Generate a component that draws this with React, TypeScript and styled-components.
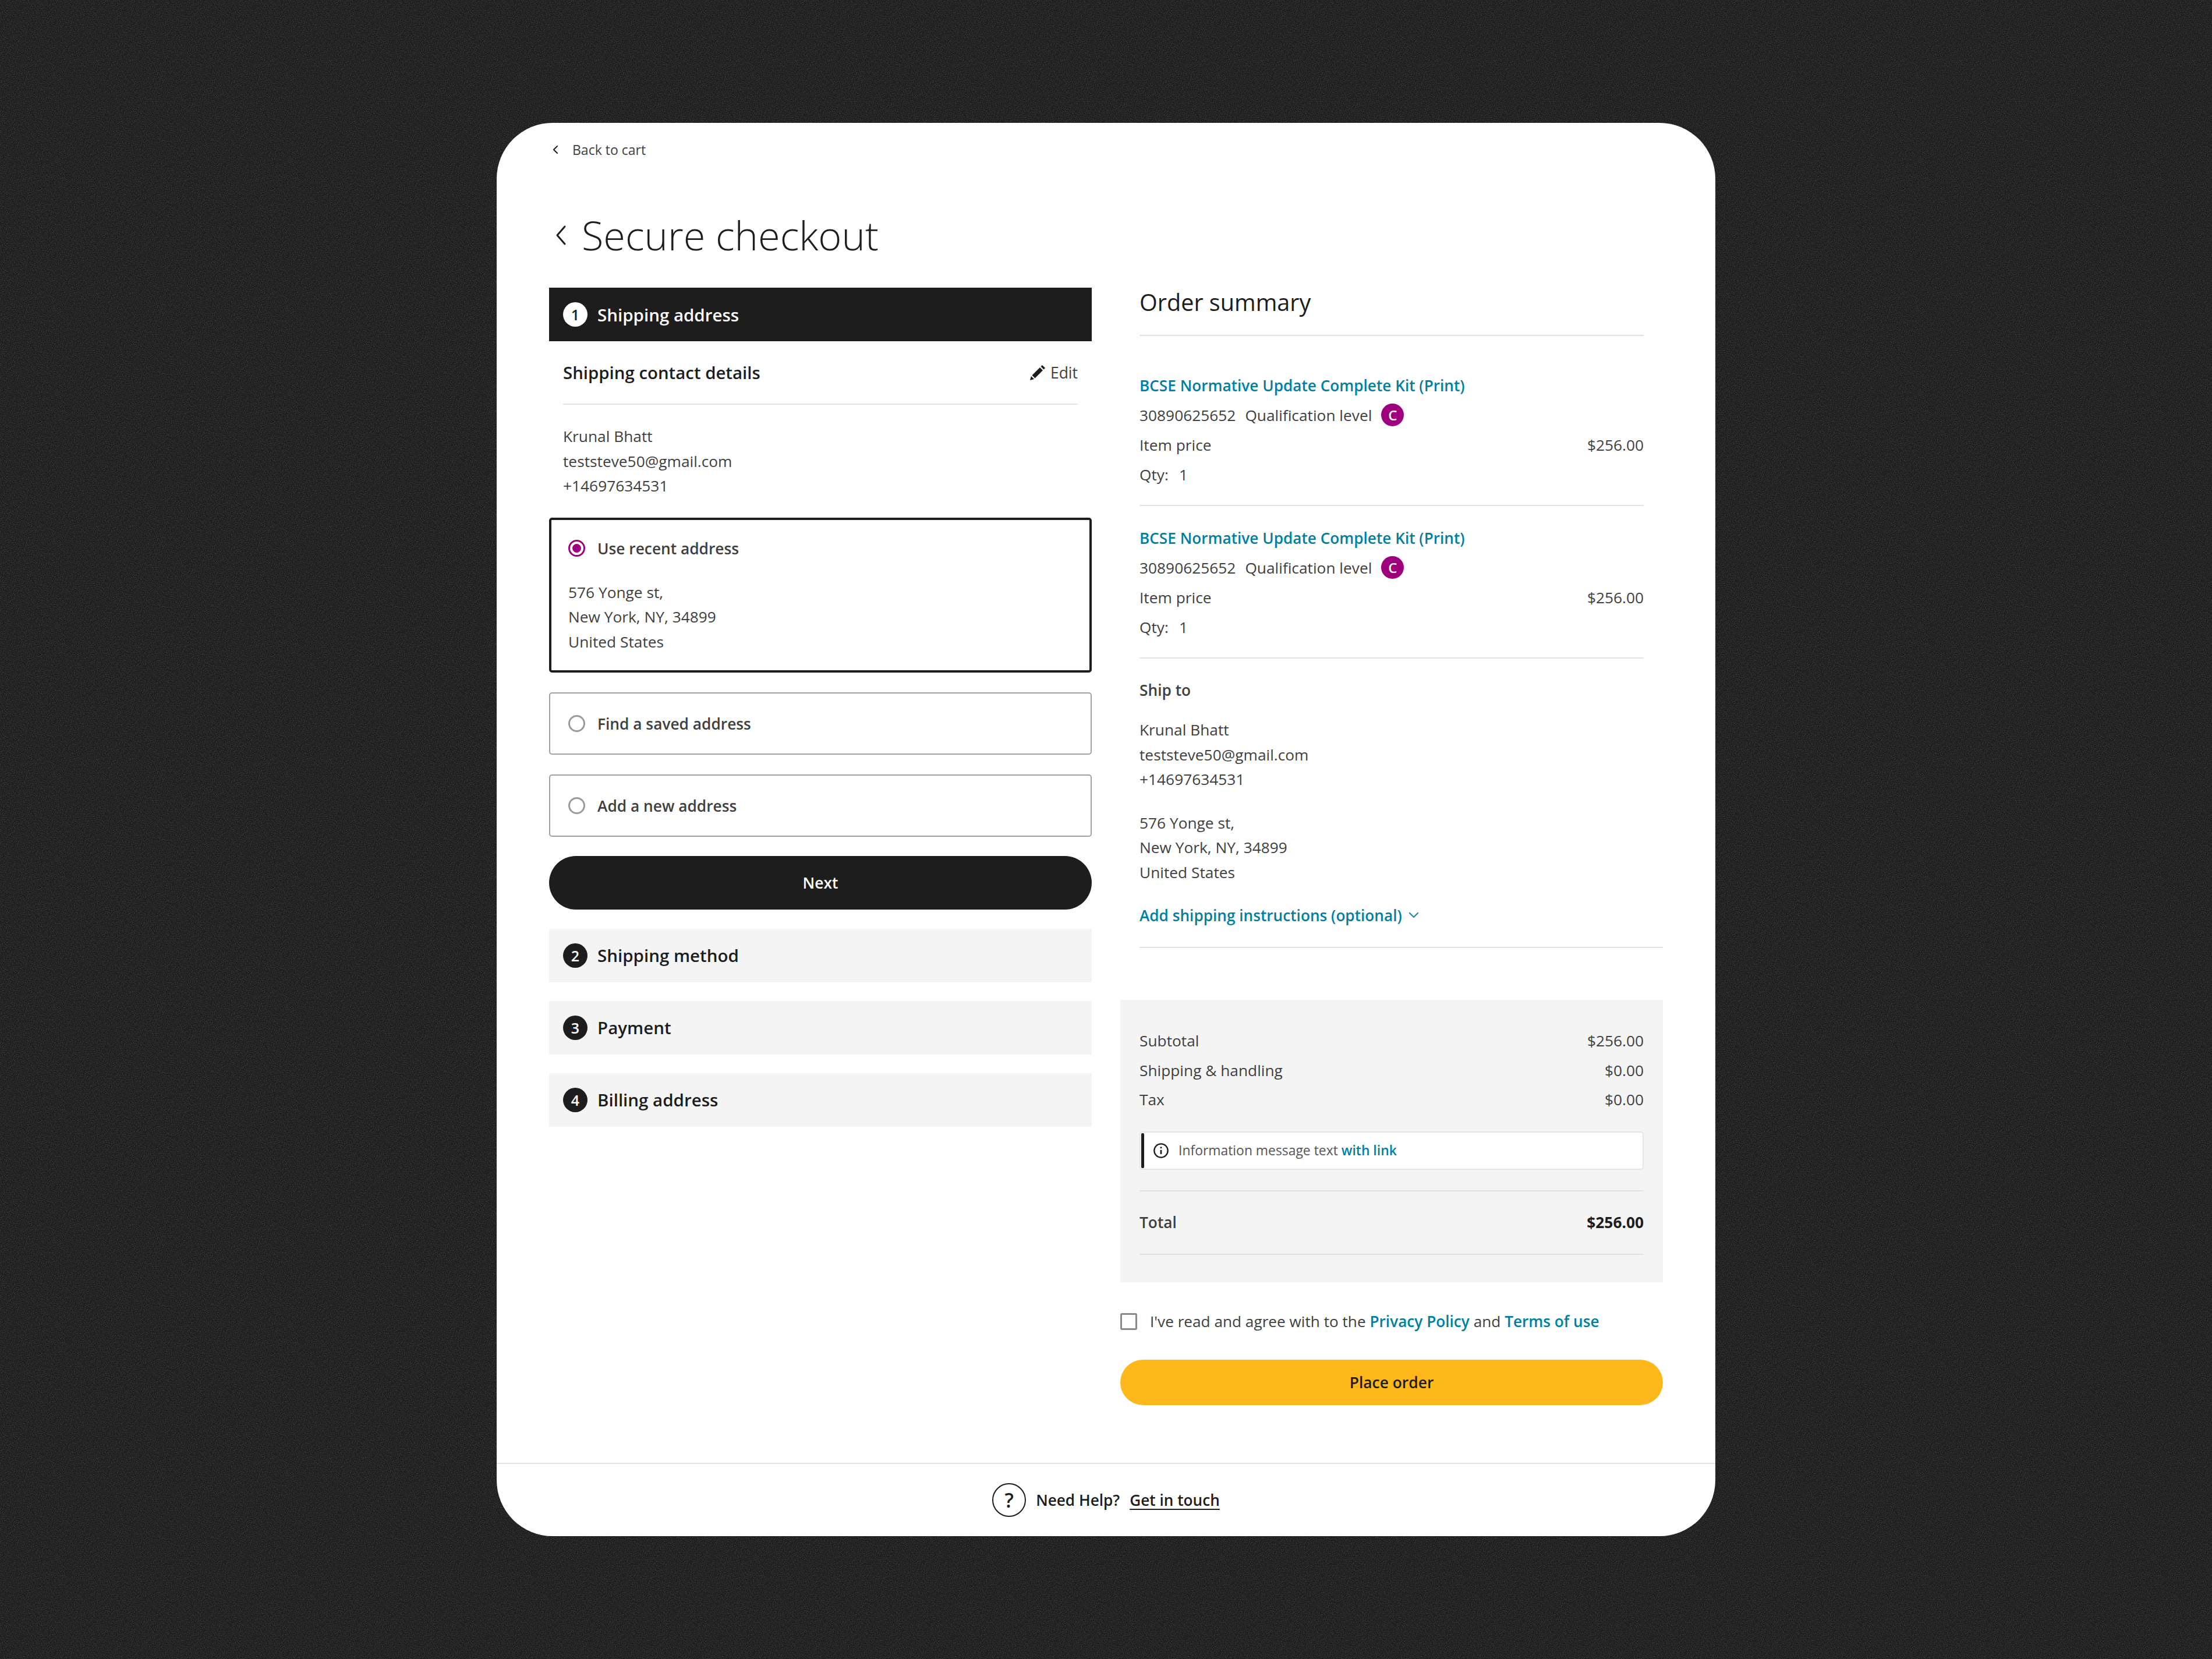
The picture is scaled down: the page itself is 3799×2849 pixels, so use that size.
import React from 'react';
import styled, { createGlobalStyle } from 'styled-components';

const noise = "data:image/svg+xml," + encodeURIComponent(
  `<svg xmlns='http://www.w3.org/2000/svg' width='400' height='400'><filter id='n'><feTurbulence type='fractalNoise' baseFrequency='0.7' numOctaves='2' stitchTiles='stitch'/><feColorMatrix values='0 0 0 0 1  0 0 0 0 1  0 0 0 0 1  0.4 0 0 0 -0.17'/></filter><rect width='400' height='400' filter='url(#n)'/></svg>`
);

const Global = createGlobalStyle`
  html, body { margin: 0; padding: 0; background: #1c1c1c; }
  * { box-sizing: border-box; }
  body { font-family: "Open Sans", "Noto Sans", sans-serif; color: #404040; }
`;

const Page = styled.div`
  width: 3799px; height: 2849px; display: flex; align-items: center; justify-content: center;
  background-color: #1c1c1c; background-image: url("${noise}");
`;
const Card = styled.main`
  width: 2093px; height: 2427px; background: #fff; border-radius: 96px; display: flex; flex-direction: column; overflow: hidden;
`;
const Body = styled.div`flex: 1; padding: 0 90px;`;
const BackLink = styled.a`
  display: flex; align-items: center; gap: 24px; height: 46px; margin-top: 23px; padding-left: 6px; font-size: 23px; color: #404040;
`;
const Title = styled.h1`
  margin: 76px 0 0; height: 96px; display: flex; align-items: center; gap: 26px; padding-left: 11px; font-size: 68.5px; font-weight: 300; color: #1d1d1d; line-height: 96px;
`;
const Columns = styled.div`display: grid; grid-template-columns: 932px 932px; column-gap: 49px; margin-top: 42px;`;
const LeftCol = styled.section`display: flex; flex-direction: column;`;
const RightCol = styled.section`display: flex; flex-direction: column;`;

const StepBar = styled.div<{ $active?: boolean }>`
  height: 92px; display: flex; align-items: center; gap: 17px; padding: 0 24px;
  background: ${p => p.$active ? '#1d1d1d' : '#f4f4f4'};
  color: ${p => p.$active ? '#fff' : '#1d1d1d'};
  font-size: 29.5px; font-weight: 600; margin-top: ${p => p.$active ? 0 : 32}px;
`;
const StepNum = styled.span<{ $active?: boolean }>`
  width: 42px; height: 42px; border-radius: 50%; display: flex; align-items: center; justify-content: center;
  background: ${p => p.$active ? '#fff' : '#1d1d1d'}; color: ${p => p.$active ? '#1d1d1d' : '#fff'};
  font-size: 25px; font-weight: 600;
`;
const ContactHead = styled.div`
  margin: 0 24px; height: 109px; display: flex; align-items: center; justify-content: space-between; border-bottom: 2px solid #e4e4e4;
  font-size: 29.4px; font-weight: 600; color: #1d1d1d;
`;
const EditLink = styled.a`display: flex; align-items: center; gap: 8px; font-size: 26.5px; font-weight: 400; color: #404040;`;
const Lines = styled.div<{ $mt?: number; $ml?: number }>`
  margin-top: ${p => p.$mt ?? 0}px; margin-left: ${p => p.$ml ?? 0}px; font-size: 26.3px; line-height: 42.5px; color: #404040;
`;
const RadioCard = styled.div<{ $selected?: boolean }>`
  margin-top: ${p => p.$selected ? 33 : 34}px; border-radius: 5px; padding: ${p => p.$selected ? '0 29px' : '0 31px'};
  border: ${p => p.$selected ? '4px solid #1d1d1d' : '2px solid #a0a0a0'};
  height: ${p => p.$selected ? 266 : 107}px;
`;
const RadioRow = styled.div<{ $h: number }>`
  height: ${p => p.$h}px; display: flex; align-items: center; gap: 21px; font-size: 26.3px; font-weight: 600; color: #404040;
`;
const RadioDot = styled.span<{ $on?: boolean }>`
  width: 29px; height: 29px; border-radius: 50%; flex: none;
  border: 3px solid ${p => p.$on ? '#9e007e' : '#9a9a9a'}; padding: 4px;
  &::after { content: ''; display: ${p => p.$on ? 'block' : 'none'}; width: 100%; height: 100%; border-radius: 50%; background: #9e007e; }
`;
const NextButton = styled.button`
  margin: 33px 0 1px; height: 92px; border: 0; border-radius: 46px; background: #1d1d1d; color: #fff; font: 600 26.4px "Open Sans", sans-serif;
`;

const SummaryTitle = styled.h2`
  margin: 0 33px; height: 83px; font-size: 39.6px; line-height: 50px; font-weight: 400; color: #1d1d1d; border-bottom: 2px solid #e0e0e0;
`;
const SummaryInner = styled.div`padding: 0 33px;`;
const Item = styled.div<{ $first?: boolean }>`
  padding-top: ${p => p.$first ? 60 : 30}px; padding-bottom: 27px; border-bottom: 2px solid #e4e4e4;
`;
const Row = styled.div`
  height: 51px; display: flex; align-items: center; justify-content: space-between; font-size: 26.3px; line-height: 46px; color: #404040;
`;
const TopRow = styled(Row)`height: 50px;`;
const Inline = styled.span`display: flex; align-items: center; gap: 16px;`;
const ItemLink = styled.a`font-size: 26.2px; font-weight: 600; color: #007fa3;`;
const LevelBadge = styled.span`
  width: 39px; height: 39px; border-radius: 50%; background: #9e007e; color: #fff; font-size: 24px; font-weight: 600; display: flex; align-items: center; justify-content: center;
`;
const QtyValue = styled.span`margin-left: 18px;`;
const ShipTo = styled.div`font-size: 26.3px; font-weight: 600; color: #404040; line-height: 42px; margin-top: 33px;`;
const AddLink = styled.a`
  display: flex; align-items: center; gap: 11px; height: 42px; margin-top: 32px; font-size: 26.2px; font-weight: 600; color: #007fa3;
`;
const WideRule = styled.div`height: 2px; background: #e4e4e4; margin: 33px 0 0 33px;`;
const Totals = styled.div`margin-top: 89px; height: 485px; background: #f4f4f4; padding: 45px 33px 0;`;
const TotalRow = styled(Row)`height: 50.5px;`;
const InfoBox = styled.div`
  margin-top: 29px; height: 66px; background: #fff; border: 2px solid #e6e6e6; border-radius: 5px; position: relative;
  display: flex; align-items: center; gap: 16px; padding-left: 21px; font-size: 22.9px; color: #555;
  &::before { content: ''; position: absolute; left: 1px; top: 1px; bottom: 1px; width: 5px; background: #1d1d1d; border-radius: 2px; }
`;
const InfoLink = styled.a`color: #007fa3; font-weight: 600;`;
const Rule = styled.div<{ $mt: number }>`height: 2px; background: #e0e0e0; margin-top: ${p => p.$mt}px;`;
const GrandRow = styled(Row)`height: 107px; font-weight: 600;`;
const GrandValue = styled.span`font-weight: 700; color: #1d1d1d;`;
const Agree = styled.label`
  display: flex; align-items: center; gap: 22px; height: 42px; margin-top: 46px; font-size: 26.2px; color: #404040;
`;
const Box = styled.span`width: 29px; height: 29px; border: 3px solid #8a8a8a; border-radius: 3px; flex: none;`;
const AgreeLink = styled.a`font-weight: 600; color: #007fa3;`;
const PlaceButton = styled.button`
  margin-top: 45px; height: 78px; border: 0; border-radius: 39px; background: #ffb81c; color: #1d1d1d; font: 600 26.4px "Open Sans", sans-serif;
`;
const Footer = styled.footer`
  height: 126px; border-top: 2px solid #e4e4e4; display: flex; align-items: center; justify-content: center; gap: 17px; font-size: 26.2px; font-weight: 600; color: #1d1d1d;
`;
const HelpCircle = styled.span`
  width: 58px; height: 58px; border: 2px solid #1d1d1d; border-radius: 50%; display: flex; align-items: center; justify-content: center; font-size: 34px; font-weight: 600;
`;
const GetInTouch = styled.a`text-decoration: underline; text-underline-offset: 5px;`;

const Chevron = ({ w, h, sw }: { w: number; h: number; sw: number }) => (
  <svg width={w} height={h} viewBox={`0 0 ${w} ${h}`} fill="none" stroke="#1d1d1d" strokeWidth={sw} strokeLinecap="round" strokeLinejoin="round">
    <path d={`M${w - sw} ${sw} L${sw} ${h / 2} L${w - sw} ${h - sw}`} />
  </svg>
);
const Pencil = () => (
  <svg width="28" height="28" viewBox="0 0 28 28" fill="#1d1d1d">
    <path d="M1 27l2-7 5 5z" />
    <path d="M4.500 18.500L18 5l5 5L9.500 23.500z" />
    <path d="M19.500 3.500l2.500-2.500 5 5-2.500 2.500z" />
  </svg>
);
const Info = () => (
  <svg width="28" height="28" viewBox="0 0 24 24" fill="none" stroke="#1d1d1d" strokeWidth="2">
    <circle cx="12" cy="12" r="10" />
    <path d="M12 11v6" strokeWidth="2.4" />
    <circle cx="12" cy="7.500" r="1.300" fill="#1d1d1d" stroke="none" />
  </svg>
);
const Down = () => (
  <svg width="18" height="12" viewBox="0 0 18 12" fill="none" stroke="#2a8aa8" strokeWidth="2.4" strokeLinecap="round" strokeLinejoin="round">
    <path d="M2 2l7 7 7-7" />
  </svg>
);

const ItemBlock = ({ first }: { first?: boolean }) => (
  <Item $first={first}>
    <TopRow><ItemLink>BCSE Normative Update Complete Kit (Print)</ItemLink></TopRow>
    <Row><Inline><span>30890625652</span><span>Qualification level</span><LevelBadge>C</LevelBadge></Inline></Row>
    <Row><span>Item price</span><span>$256.00</span></Row>
    <Row><span>Qty:<QtyValue>1</QtyValue></span></Row>
  </Item>
);

export default function App() {
  return (
    <Page>
      <Global />
      <Card>
        <Body>
          <BackLink><Chevron w={10} h={16} sw={2} /><span>Back to cart</span></BackLink>
          <Title><Chevron w={19} h={36} sw={3} /><span>Secure checkout</span></Title>
          <Columns>
            <LeftCol>
              <StepBar $active><StepNum $active>1</StepNum>Shipping address</StepBar>
              <ContactHead>
                <span>Shipping contact details</span>
                <EditLink><Pencil />Edit</EditLink>
              </ContactHead>
              <Lines $mt={33} $ml={24}>
                <div>Krunal Bhatt</div><div>teststeve50@gmail.com</div><div>+14697634531</div>
              </Lines>
              <RadioCard $selected>
                <RadioRow $h={98}><RadioDot $on />Use recent address</RadioRow>
                <Lines $mt={5}>
                  <div>576 Yonge st,</div><div>New York, NY, 34899</div><div>United States</div>
                </Lines>
              </RadioCard>
              <RadioCard><RadioRow $h={104}><RadioDot />Find a saved address</RadioRow></RadioCard>
              <RadioCard><RadioRow $h={104}><RadioDot />Add a new address</RadioRow></RadioCard>
              <NextButton>Next</NextButton>
              <StepBar><StepNum>2</StepNum>Shipping method</StepBar>
              <StepBar><StepNum>3</StepNum>Payment</StepBar>
              <StepBar><StepNum>4</StepNum>Billing address</StepBar>
            </LeftCol>
            <RightCol>
              <SummaryTitle>Order summary</SummaryTitle>
              <SummaryInner>
                <ItemBlock first />
                <ItemBlock />
                <ShipTo>Ship to</ShipTo>
                <Lines $mt={26}>
                  <div>Krunal Bhatt</div><div>teststeve50@gmail.com</div><div>+14697634531</div>
                </Lines>
                <Lines $mt={32}>
                  <div>576 Yonge st,</div><div>New York, NY, 34899</div><div>United States</div>
                </Lines>
                <AddLink>Add shipping instructions (optional)<Down /></AddLink>
              </SummaryInner>
              <WideRule />
              <Totals>
                <TotalRow><span>Subtotal</span><span>$256.00</span></TotalRow>
                <TotalRow><span>Shipping &amp; handling</span><span>$0.00</span></TotalRow>
                <TotalRow><span>Tax</span><span>$0.00</span></TotalRow>
                <InfoBox><Info /><span>Information message text <InfoLink>with link</InfoLink></span></InfoBox>
                <Rule $mt={35} />
                <GrandRow><span>Total</span><GrandValue>$256.00</GrandValue></GrandRow>
                <Rule $mt={0} />
              </Totals>
              <Agree><Box /><span>I've read and agree with to the <AgreeLink>Privacy Policy</AgreeLink> and <AgreeLink>Terms of use</AgreeLink></span></Agree>
              <PlaceButton>Place order</PlaceButton>
            </RightCol>
          </Columns>
        </Body>
        <Footer>
          <HelpCircle>?</HelpCircle>
          <span>Need Help?</span>
          <GetInTouch>Get in touch</GetInTouch>
        </Footer>
      </Card>
    </Page>
  );
}
